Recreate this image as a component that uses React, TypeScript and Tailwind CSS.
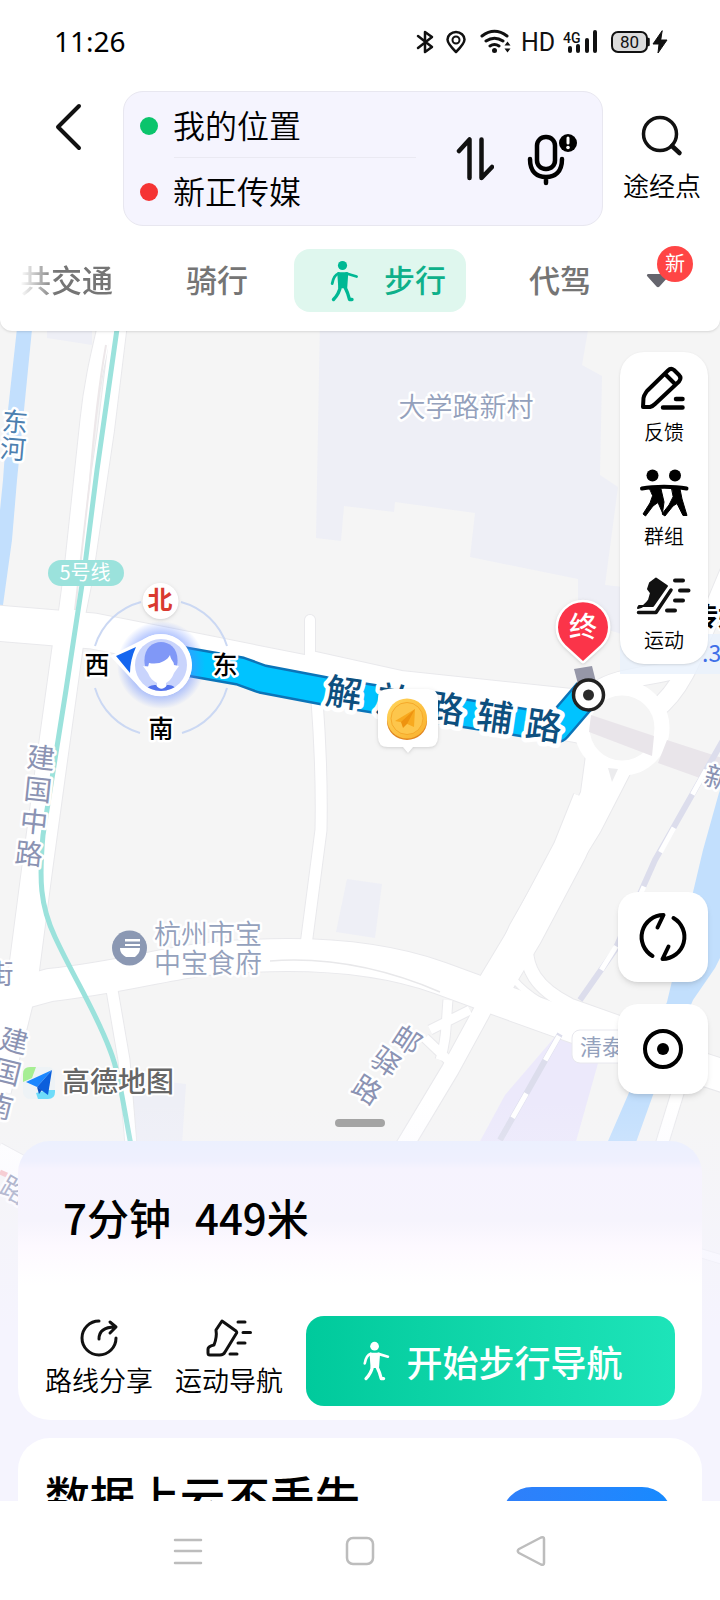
import type { ReactNode } from "react";

const INK = "#111111";
const ROAD_LABEL = "#8b93b3";
const POI_LABEL = "#94a1bc";
const BLOCK = "#eeeff6";
const WATER = "#c2dffd";
const METRO = "#9be2dc";

type Glyph = [char: string, x: number, y: number];

function MapLabel({
  glyphs,
  size,
  fill,
  rotate = 0,
  halo = 5,
  weight = 400,
}: {
  glyphs: Glyph[];
  size: number;
  fill: string;
  rotate?: number;
  halo?: number;
  weight?: number;
}) {
  return (
    <g
      fontSize={size}
      fontWeight={weight}
      fill={fill}
      stroke="#ffffff"
      strokeWidth={halo}
      strokeLinejoin="round"
      paintOrder="stroke"
      textAnchor="middle"
    >
      {glyphs.map(([char, x, y]) => (
        <text key={`${char}${y}`} transform={`translate(${x} ${y}) rotate(${rotate})`} y={size * 0.36}>
          {char}
        </text>
      ))}
    </g>
  );
}

function WalkIcon({ className }: { className: string }) {
  return (
    <svg viewBox="0 0 28 42" className={className} fill="none" stroke="currentColor" strokeLinecap="round" strokeLinejoin="round" aria-hidden>
      <circle cx="12.500" cy="5.500" r="4.600" fill="currentColor" stroke="none" />
      <path d="M8 13h9.500l-1 14.500H9z" fill="currentColor" strokeWidth="1.500" />
      <path d="M8.500 13.500C4 15 3 19 2.200 23.500M16.500 13.500L26.500 16.500" strokeWidth="2.800" />
      <path d="M10.500 26C9.500 32 7 36 3.500 39.500M14.500 26C17 31 18.500 35 19.500 39.500H22" strokeWidth="3.400" />
    </svg>
  );
}

function StatusBar() {
  return (
    <div className="flex h-[91px] items-start justify-between pt-[23px] pr-[51px] pl-[54px]">
      <span className="font-['Noto_Sans'] text-[28px] leading-9 text-black">11:26</span>
      <svg viewBox="415 28 254 28" className="mt-[5px] h-7 w-[254px]" fill="none" stroke={INK} strokeWidth="2.500" strokeLinecap="round" strokeLinejoin="round" aria-label="状态栏">
        <path d="M418 36l14 11-7 5V32l7 5-14 11" strokeWidth="2.500" />
        <path d="M456 52c-5-5-8.500-9-8.500-12.500a8.500 7.500 0 0 1 17 0c0 3.500-3.500 7.500-8.500 12.500z" />
        <circle cx="456" cy="40" r="3.500" strokeWidth="2" />
        <path d="M482 36c8-6 17-6 25 0M486 41c6-4 11-4 17 0M490 46c3-2 6-2 9 0" strokeWidth="3" />
        <circle cx="494.500" cy="50.500" r="2.500" fill={INK} stroke="none" />
        <path d="M504.500 45.500l3-4 3 4zM504.500 48.500l3 4 3-4z" fill={INK} stroke="none" />
        <g fill={INK} stroke="none" fontFamily="'Roboto', sans-serif">
          <text x="521" y="51" fontSize="25">
            HD
          </text>
          <text x="563" y="43" fontSize="14" fontWeight="500">
            4G
          </text>
          <rect x="568" y="46" width="4" height="7" rx="2" />
          <rect x="576" y="44" width="4" height="9" rx="2" />
          <rect x="585" y="38" width="4" height="15" rx="2" />
          <rect x="593" y="30" width="4" height="23" rx="2" />
        </g>
        <rect x="612" y="32" width="35" height="20" rx="6" fill="#dcdcdc" strokeWidth="2" />
        <path d="M648.500 39v6" />
        <text x="629.500" y="48" fontSize="17" textAnchor="middle" fill={INK} stroke="none" fontFamily="'Roboto', sans-serif">
          80
        </text>
        <path d="M662 31l-9 13h6l-1 9 9-13h-6z" fill={INK} stroke={INK} strokeWidth="1" />
      </svg>
    </div>
  );
}

function PlaceRow({ label, value, dot }: { label: string; value: string; dot: string }) {
  return (
    <div className="flex h-[67px] items-center">
      <span className={`size-[18px] shrink-0 rounded-full ${dot}`} />
      <input
        aria-label={label}
        defaultValue={value}
        className="ml-[15px] min-w-0 flex-1 bg-transparent pb-1 text-[32px] leading-10 font-[350] text-black outline-none"
      />
    </div>
  );
}

function RouteForm() {
  return (
    <div className="flex items-start pl-[52px]">
      <button type="button" aria-label="返回" className="mt-3 shrink-0">
        <svg viewBox="0 0 32 48" className="h-12 w-8" fill="none" stroke={INK} strokeWidth="4" strokeLinecap="round" strokeLinejoin="round">
          <path d="M27 3L6 24l21 21" />
        </svg>
      </button>
      <form className="ml-[39px] flex min-w-0 flex-1 items-center rounded-[20px] border border-[#e8e7f0] bg-[#f5f4fe] pl-4">
        <div className="min-w-0 flex-1">
          <PlaceRow label="起点" value="我的位置" dot="bg-[#0bc46c]" />
          <div className="-mt-0.5 ml-[34px] h-px bg-[#eae9f2]" />
          <PlaceRow label="终点" value="新正传媒" dot="bg-[#f53434]" />
        </div>
        <button type="button" aria-label="交换起终点" className="ml-10 shrink-0">
          <svg viewBox="0 0 38 46" className="h-[46px] w-[38px]" fill="none" stroke={INK} strokeWidth="4.500" strokeLinecap="round" strokeLinejoin="round">
            <path d="M3 15L13.500 3.500V42M25.500 3.500V42L36 31" />
          </svg>
        </button>
        <button type="button" aria-label="语音输入" className="mr-6 ml-8 shrink-0">
          <svg viewBox="0 0 52 54" className="h-[54px] w-[52px]" fill="none" stroke="#000000" strokeWidth="4.500" strokeLinecap="round">
            <rect x="11" y="5" width="18" height="32" rx="8.500" />
            <path d="M4 27c0 13 7 18 16 18s16-5 16-18M20 46v5" />
            <circle cx="42" cy="11" r="9" fill="#000000" stroke="none" />
            <path d="M42 6v5" stroke="#ffffff" strokeWidth="3" />
            <circle cx="42" cy="15.500" r="1.800" fill="#ffffff" stroke="none" />
          </svg>
        </button>
      </form>
      <button type="button" className="mt-[22px] mr-[19px] ml-5 flex shrink-0 flex-col items-center">
        <svg viewBox="0 0 44 44" className="size-11" fill="none" stroke={INK} strokeWidth="3.500" strokeLinecap="round">
          <circle cx="20" cy="21" r="16.500" />
          <path d="M32 33l7.500 7" strokeWidth="4.500" />
        </svg>
        <span className="mt-[10px] text-[26px] leading-9 font-[350] text-black">途经点</span>
      </button>
    </div>
  );
}

function ModeTabs() {
  return (
    <nav className="flex items-center pt-[23px] pb-[19px] pl-5 text-[31px] leading-9 font-medium whitespace-nowrap text-[#757575]">
      <button type="button" className="pb-1 [mask-image:linear-gradient(to_right,transparent,black_36px)]">
        共交通
      </button>
      <button type="button" className="ml-[73px] pb-1">
        骑行
      </button>
      <button type="button" aria-current="page" className="ml-[46px] flex h-[63px] items-center rounded-2xl bg-[#dff7ee] pr-5 pl-9 text-[#0eb08a]">
        <WalkIcon className="h-[42px] w-7 text-[#00b894]" />
        <span className="ml-[26px] pb-1">步行</span>
      </button>
      <button type="button" className="ml-[63px] pb-1">
        代驾
      </button>
      <button type="button" aria-label="更多出行方式" className="relative ml-[55px]">
        <svg viewBox="0 0 24 14" className="h-3.5 w-6" fill="#65656d">
          <path d="M2 0h20q2 1 .5 2.500L13.500 12.500q-1.500 1.500-3 0L1.500 2.500Q0 1 2 0z" />
        </svg>
        <span className="absolute -top-7 left-[11px] flex size-9 items-center justify-center rounded-full bg-[#ff4545] pb-0.5 text-xl font-normal text-white">
          新
        </span>
      </button>
    </nav>
  );
}

function Basemap() {
  return (
    <>
      <rect y="300" width="720" height="1220" fill="#f5f5f5" />
      <g fill={BLOCK}>
        <path d="M320 319H590L582 365L602 376L600 475L618 487L605 585L650 590L640 640L578 620V579L470 557L475 513L395 502L394 512L344 506L341 541L316 538z" />
        <path d="M47 319H92V345L47 338z" />
        <path d="M347 879L382 884L375 938L336 932z" />
        <path d="M133 1078L186 1084L182 1145H133z" />
      </g>
      <path d="M560 1031L604 1042L575 1145H478L505 1095z" fill="#ece9fb" />
      <g fill={WATER}>
        <path d="M18 319H33L25 400L17 480L12 540L3 605H0V510L3 480L8 410z" />
        <path d="M724 775L703 850L667 1002L628 1095L605 1148H634L653 1095L693 1000L715 968L724 950z" />
      </g>

      {/* casing first, then the white carriageway */}
      {[
        { stroke: "#e9e9ec", extra: 2 },
        { stroke: "#ffffff", extra: 0 },
      ].map(({ stroke, extra }) => (
        <g key={stroke} fill="none" stroke={stroke} strokeLinejoin="round">
          <path d="M108 315C100 350 92 380 88 420L72 570L64 630" strokeWidth={15 + extra} />
          <path d="M120 315L106 430L84 580L74 630" strokeWidth={16 + extra} />
          <path d="M70 630L52 760L37 870L22 985L-4 1090" strokeWidth={30 + extra} />
          <path d="M-5 623L93 631L200 652L305 673L400 693L590 727" strokeWidth={35 + extra} />
          <path d="M305 664L400 685L580 704" strokeWidth={28 + extra} />
          <path d="M310 620V660" strokeWidth={10 + extra} strokeLinecap="round" />
          <path d="M317 700C320 740 322 780 321 830L306 945" strokeWidth={11 + extra} />
          <path d="M-5 1000L50 985C140 975 180 957 250 956C330 952 390 960 440 978L500 1000L600 1036L730 1078" strokeWidth={32 + extra} />
          <path d="M112 990L124 1060L131 1145" strokeWidth={11 + extra} />
          <path d="M538 905L480 1015L450 1070L402 1150" strokeWidth={17 + extra} />
          <path d="M587 748L581 792L548 858L510 925L490 970L530 950L555 905L600 832L636 762z" strokeWidth={extra} fill="#ffffff" />
          <path d="M590 800L570 850L525 935L486 1000" strokeWidth={34 + extra} />
          <path d="M528 930C520 970 540 990 570 1005L640 1030" strokeWidth={13 + extra} />
          <path d="M503 960C512 985 535 1000 560 1012" strokeWidth={6 + extra} />
          <path d="M448 1000C446 1020 447 1040 440 1060M430 1030L470 1010M425 1038L448 1060" strokeWidth={9 + extra} />
          <path d="M680 1085L660 1150" strokeWidth={12 + extra} />
          <path d="M655 710C682 690 692 660 730 570M595 692C620 675 650 678 680 668" strokeWidth={18 + extra} />
          <path d="M-5 1155L60 1190" strokeWidth={26 + extra} />
          <path d="M690 1250L730 1262" strokeWidth={8 + extra} />
        </g>
      ))}
      <path d="M106 345C98 390 94 430 90 480L75 610" fill="none" stroke="#ede8ea" strokeWidth="2" />
      <path d="M270 961C310 958 370 962 440 992" fill="none" stroke="#e8e8ea" strokeWidth="1.500" />
      <circle cx="622" cy="728" r="40" fill="#f5f5f5" stroke="#ffffff" strokeWidth="15" />
      <path d="M608 768L612 782L618 769z" fill="#ececee" />
      <path d="M591 715L654 736L652 756L589 732zM667 740L722 758V786L658 763z" fill="#e9e5ea" />
      <path d="M0 1172L16 1179" stroke="#f7bcc0" strokeWidth="5" />

      <g fill="none">
        <path d="M726 735L655 860L615 950L580 1000M560 1034L500 1140" stroke="#dcddec" strokeWidth="6" />
        <path d="M706 770L655 862L620 940L590 988M559 1036L500 1140" stroke="#ffffff" strokeWidth="5" strokeDasharray="28 38" />
        <path d="M119 315L97 470L85 565L66 690L43 835C39 880 40 905 55 937C75 980 95 1010 110 1050C120 1075 124 1110 131 1145" stroke={METRO} strokeWidth="5" />
      </g>
    </>
  );
}

function MapCanvas() {
  return (
    <svg viewBox="0 319 720 1182" preserveAspectRatio="xMidYMin slice" className="absolute inset-0 h-full w-full" aria-label="地图">
      <defs>
        <linearGradient id="coin" x1="0" y1="0" x2="1" y2="1">
          <stop offset="0%" stopColor="#ffd45c" />
          <stop offset="100%" stopColor="#f9b02c" />
        </linearGradient>
        <linearGradient id="sheetFade" x1="0" y1="0" x2="0" y2="1">
          <stop offset="0%" stopColor="#f5f4fe" stopOpacity="0" />
          <stop offset="45%" stopColor="#f5f4fe" stopOpacity="0.45" />
          <stop offset="100%" stopColor="#f5f4fe" />
        </linearGradient>
        <radialGradient id="glow">
          <stop offset="60%" stopColor="#5b83ff" stopOpacity="0.6" />
          <stop offset="100%" stopColor="#5b83ff" stopOpacity="0" />
        </radialGradient>
        <clipPath id="avatar">
          <circle cx="161" cy="665" r="26" />
        </clipPath>
      </defs>

      <Basemap />

      <MapLabel glyphs={[["东", 15, 422], ["河", 13, 449]]} size={26} fill="#4d80b0" rotate={5} />
      <MapLabel glyphs={[["大学路新村", 466, 407]]} size={27} fill={POI_LABEL} weight={350} />
      <MapLabel glyphs={[["建", 41, 758], ["国", 38, 790], ["中", 34, 822], ["路", 29, 854]]} size={28} fill={ROAD_LABEL} rotate={6} />
      <MapLabel glyphs={[["街", 0, 974]]} size={27} fill={ROAD_LABEL} />
      <MapLabel glyphs={[["建", 14, 1041], ["国", 7, 1072], ["南", -1, 1106]]} size={28} fill={ROAD_LABEL} rotate={14} />
      <MapLabel glyphs={[["路", 14, 1190]]} size={27} fill={ROAD_LABEL} rotate={30} />
      <MapLabel glyphs={[["邮", 407, 1040], ["驿", 386, 1062], ["路", 367, 1090]]} size={28} fill={ROAD_LABEL} rotate={33} />
      <MapLabel glyphs={[["新", 718, 778]]} size={27} fill={ROAD_LABEL} rotate={15} />
      <MapLabel glyphs={[["杭州市宝", 208, 934], ["中宝食府", 208, 963]]} size={27} fill={POI_LABEL} weight={350} />
      <circle cx="129.500" cy="948" r="17.500" fill="#8b98b3" />
      <path d="M120 948h20c0 5-3 7-5 9h-9c-3-2-6-4-6-9zM125 939h15v2.500h-15zM125 944h15v2h-15z" fill="#ffffff" />

      <rect x="48" y="560" width="76" height="26" rx="13" fill={METRO} />
      <text x="85" y="580" fontSize="20" textAnchor="middle" fill="#ffffff">
        5号线
      </text>

      <rect x="572" y="1030" width="90" height="33" rx="8" fill="#ffffff" stroke="#e8e8ee" />
      <text x="580" y="1055" fontSize="22" fill={POI_LABEL}>
        清泰
      </text>

      <rect x="620" y="634" width="110" height="40" fill="#e9f1fd" opacity="0.8" />
      <MapLabel glyphs={[["新正传媒", 692, 617]]} size={26} fill="#000000" weight={700} />
      <text x="702" y="662" fontSize="23" fill="#3f6fe8">
        .3
      </text>

      {/* walking route */}
      <g fill="none" strokeLinejoin="round">
        <path d="M183 661L240 671L262 679L325 691L557 728L588 692" stroke="#0b74b8" strokeWidth="30" />
        <path d="M183 661L240 671L262 679L325 691L557 728L588 692" stroke="#00c3ff" strokeWidth="25" />
      </g>
      <MapLabel
        glyphs={[["解", 344, 693], ["放", 395, 701], ["路", 446, 709], ["辅", 495, 717], ["路", 544, 726]]}
        size={36}
        fill="#0d4f7e"
        rotate={8}
        halo={9}
        weight={500}
      />
      <path d="M574 669L592 666L596 682L578 684z" fill="#9697a8" />
      <circle cx="588.500" cy="695" r="15" fill="#ffffff" stroke="#222222" strokeWidth="3.500" />
      <circle cx="588.500" cy="695" r="5.500" fill="#2b2b2b" />

      <path d="M583 661L565.500 645A25 25 0 1 1 600.500 645z" fill="#fb3449" stroke="#ffffff" strokeWidth="5" strokeLinejoin="round" paintOrder="stroke" className="drop-shadow" />
      <text x="583" y="637" fontSize="28" fontWeight="500" textAnchor="middle" fill="#ffffff">
        终
      </text>

      <g className="drop-shadow">
        <path d="M388 689H428Q438 689 438 699V737Q438 747 428 747H413L408 753L403 747H388Q378 747 378 737V699Q378 689 388 689z" fill="#ffffff" />
      </g>
      <ellipse cx="407" cy="721.500" rx="20" ry="18.500" fill="#e0851f" />
      <circle cx="407" cy="718.500" r="20" fill="url(#coin)" />
      <circle cx="407" cy="718.500" r="16" fill="#fdc64c" stroke="#f6a92a" strokeWidth="1" />
      <path d="M415 709L395 721L405 723L414 727z" fill="#f8a91e" />
      <path d="M415 709L401 722L403 728L407 724z" fill="#ee9310" />

      {/* compass and current position */}
      <path d="M141 602A66 66 0 0 0 95 646M181 602A66 66 0 0 1 227 646M95 688A66 66 0 0 0 140 733M227 688A66 66 0 0 1 182 733" fill="none" stroke="#cbd8f3" strokeWidth="2" />
      <circle cx="161" cy="665" r="44" fill="url(#glow)" />
      <path d="M110 656L148 637A31 31 0 1 1 142 690z" fill="#ffffff" />
      <circle cx="161" cy="665" r="31" fill="#ffffff" />
      <path d="M116 656L136 647C132 656 130 664 130 673z" fill="#1566ef" />
      <g clipPath="url(#avatar)">
        <rect x="135" y="639" width="52" height="52" fill="#c9d4fc" />
        <path d="M145 666C139 634 183 634 177 666z" fill="#8098f7" />
        <path d="M149 663C159 665 167 661 170 655C171 661 174 661 174 665L179 666L174 673C172 679 168 682 166 683V690H157V683C153 681 150 678 148 673L143 666L148 667z" fill="#ffffff" />
        <path d="M145 692C147 686 152 685 156 685C159 690 164 690 167 685C172 685 175 686 177 692z" fill="#5272ec" />
      </g>
      <circle cx="160.500" cy="601" r="18" fill="#ffffff" className="drop-shadow" />
      <MapLabel glyphs={[["北", 160, 600]]} size={25} fill="#d93a30" weight={700} halo={0} />
      <MapLabel glyphs={[["西", 97, 665], ["东", 225, 665], ["南", 161, 729]]} size={25} fill="#000000" weight={500} />

      {/* provider mark */}
      <rect x="23" y="1067" width="32" height="32" rx="7" fill="#eef3f6" />
      <path d="M30 1067H36L32 1078L23 1082V1074Q23 1067 30 1067z" fill="#a6ee93" />
      <path d="M36 1093L48 1090H55V1092Q55 1099 48 1099H38z" fill="#6fdcf9" />
      <path d="M52 1070L26 1082L37 1087z" fill="#1b87ff" />
      <path d="M52 1070L37 1087L48 1095z" fill="#0b5fdc" />
      <path d="M37 1087L39 1094L42 1090z" fill="#0a4fc0" />
      <MapLabel glyphs={[["高德地图", 118, 1082]]} size={28} fill="#666666" weight={500} halo={4} />

      <rect y="1100" width="720" height="230" fill="url(#sheetFade)" />
      <rect y="1330" width="720" height="190" fill="#f5f4fe" />
    </svg>
  );
}

function ToolButton({ label, children }: { label: string; children: ReactNode }) {
  return (
    <button type="button" className="flex h-[104px] w-full flex-col items-center pt-[13px]">
      <svg viewBox="0 0 56 48" className="h-12 w-14" fill="none" stroke="#000000" strokeLinecap="round" strokeLinejoin="round" aria-hidden>
        {children}
      </svg>
      <span className="mt-[7px] text-xl leading-6 font-[350] text-black">{label}</span>
    </button>
  );
}

function MapTools() {
  return (
    <div className="w-[88px] rounded-3xl bg-white shadow-sm">
      <ToolButton label="反馈">
        <path d="M7 42L7.500 33C8 30 9 29 11 26L32 5.500C34 3.500 36 3.500 38 5L43 10C45 12 45 14 43 16.500L19 39C17 41 16 41.500 14 42zM29 9L39 19" strokeWidth="4" />
        <path d="M40 34H46.500M27 42.500H46.500" strokeWidth="4.500" />
      </ToolButton>
      <ToolButton label="群组">
        <circle cx="16.500" cy="6.500" r="6" fill="#000000" stroke="none" />
        <circle cx="39" cy="6.500" r="6" fill="#000000" stroke="none" />
        <path d="M6 19.500C18 17 38 17 50.500 19.500" strokeWidth="4" />
        <path d="M14 20H25L28 33L26.500 44L22 33.500L17 37L9.500 47L7 45L14 34L16.500 27zM36 20H44L46 30L49 40L51 46.500H47L41 34.500L37 37L29 47L26 45L33 36L37 28z" fill="#000000" strokeWidth="1" />
      </ToolButton>
      <ToolButton label="运动">
        <path d="M20 5.500L31 13L17 33H3L2 35C8 34 11 30 13 27L15 20L12 16L14 10z" fill={INK} stroke={INK} strokeWidth="2" />
        <path d="M35 17L20 39.500H2.500" stroke={INK} strokeWidth="3.500" />
        <path d="M39 7.500H47M44 17.500H52.500M39 27.500H47M31 37.500H39" stroke={INK} strokeWidth="4" />
      </ToolButton>
    </div>
  );
}

function RouteCard() {
  return (
    <section className="rounded-[32px] bg-[linear-gradient(to_bottom,#ecf0fe_0px,#eff0fe_20px,#f6f3fe_28px,#f6f4fd_80px,#fdf9ff_105px,#ffffff_145px)] pr-[27px] pb-[14px] pl-[27px]">
      <h1 className="ml-[18px] pt-[46px] text-[42px] leading-[60px] font-medium text-black">
        <span>7分钟</span>
        <span className="ml-6">449米</span>
      </h1>
      <div className="mt-[69px] flex items-center text-[27px] leading-9 font-[350] text-black">
        <button type="button" className="flex shrink-0 flex-col items-center pb-1.5">
          <svg viewBox="0 0 40 40" className="size-10" fill="none" stroke={INK} strokeWidth="3" strokeLinecap="round" strokeLinejoin="round">
            <path d="M20 3A17 17 0 1 0 37 20M20 21C20 13 25 9 36 9M31 4l6 5-6 6" />
          </svg>
          <span className="mt-1">路线分享</span>
        </button>
        <button type="button" className="ml-[22px] flex shrink-0 flex-col items-center pb-1.5">
          <svg viewBox="0 0 48 40" className="h-10 w-12" fill="none" stroke={INK} strokeWidth="3" strokeLinecap="round" strokeLinejoin="round">
            <path d="M17 3L31 13C32 14 32 15 31 16L20 34C19 36 18 37 15 37H5Q3 37 3 35V31C3 29 5 28 9 27C11 22 12 18 11 12z" />
            <path d="M33 4H40M38 14.500H45.500M33 25H40M25 36H32" />
          </svg>
          <span className="mt-1">运动导航</span>
        </button>
        <button
          type="button"
          className="ml-[23px] flex h-[90px] min-w-0 flex-1 items-center justify-center rounded-[18px] bg-gradient-to-r from-[#00ca9c] to-[#1de4b9] pl-1 text-4xl font-medium whitespace-nowrap text-white"
        >
          <WalkIcon className="h-10 w-7" />
          <span className="ml-4">开始步行导航</span>
        </button>
      </div>
    </section>
  );
}

function PromoCard() {
  return (
    <section className="mt-[18px] flex h-[63px] items-start justify-between overflow-hidden rounded-t-[32px] bg-white pr-[30px] pl-[27px]">
      <p className="mt-7 text-[45px] leading-[60px] font-medium whitespace-nowrap text-black">数据上云不丢失</p>
      <button type="button" aria-label="查看" className="mt-[49px] h-[60px] w-[170px] shrink-0 rounded-full bg-gradient-to-r from-[#2f7ffa] to-[#168aff]" />
    </section>
  );
}

function SystemNav() {
  return (
    <nav className="flex h-[99px] shrink-0 items-center justify-center gap-[140px] bg-white text-[#bdbdbd]">
      <button type="button" aria-label="最近任务">
        <svg viewBox="0 0 32 32" className="size-8" fill="none" stroke="currentColor" strokeWidth="2.500" strokeLinecap="round">
          <path d="M3 5H29M3 16H29M3 28H29" />
        </svg>
      </button>
      <button type="button" aria-label="主屏幕">
        <svg viewBox="0 0 32 32" className="size-8" fill="none" stroke="currentColor" strokeWidth="2.500">
          <rect x="3" y="3" width="26" height="26" rx="6" />
        </svg>
      </button>
      <button type="button" aria-label="返回">
        <svg viewBox="0 0 32 32" className="size-8" fill="none" stroke="currentColor" strokeWidth="2.500" strokeLinejoin="round">
          <path d="M25 2.500Q28 1.500 28 4V28Q28 30.500 25 29.500L3 18Q0.500 16 3 14z" />
        </svg>
      </button>
    </nav>
  );
}

export default function App() {
  return (
    <div className="flex h-screen flex-col overflow-hidden bg-white font-['Noto_Sans_CJK_SC',sans-serif]">
      <header className="relative z-10 shrink-0 rounded-b-xl bg-white shadow-sm">
        <StatusBar />
        <RouteForm />
        <ModeTabs />
      </header>

      <main className="relative -mt-3 flex min-h-0 flex-1 flex-col overflow-hidden">
        <MapCanvas />
        <div className="relative flex flex-1 flex-col items-end pt-[33px] pr-3">
          <MapTools />
          <div className="mt-auto flex flex-col gap-[22px]">
            <button type="button" aria-label="刷新路线" className="flex size-[90px] items-center justify-center rounded-[20px] bg-white shadow-md">
              <svg viewBox="0 0 50 50" className="size-[50px]" fill="none" stroke="#000000" strokeWidth="4" strokeLinecap="round" strokeLinejoin="round">
                <path d="M14.500 44A22 22 0 0 1 25.500 3L19.500 15.500M35.500 6A22 22 0 0 1 24.500 47L30.500 34.500" />
              </svg>
            </button>
            <button type="button" aria-label="定位" className="flex size-[90px] items-center justify-center rounded-[20px] bg-white shadow-md">
              <svg viewBox="0 0 44 44" className="size-11" fill="none" stroke="#000000" strokeWidth="4">
                <circle cx="22" cy="22" r="18" />
                <circle cx="22" cy="22" r="6" fill="#000000" stroke="none" />
              </svg>
            </button>
          </div>
          <div className="mt-[25px] mr-[-12px] mb-[14px] h-2 w-[50px] self-center rounded-full bg-[#a4a4a4]" />
        </div>
        <div className="relative px-[18px]">
          <RouteCard />
          <PromoCard />
        </div>
      </main>

      <SystemNav />
    </div>
  );
}
